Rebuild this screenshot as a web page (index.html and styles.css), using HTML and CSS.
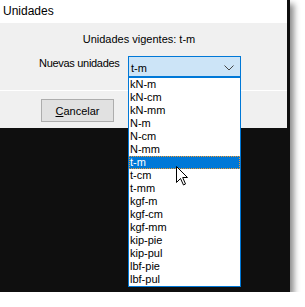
FILE: index.html
```html
<!DOCTYPE html>
<html lang="es">
<head>
    <meta charset="UTF-8">
    <title>Unidades</title>
    <link rel="stylesheet" href="styles.css">
</head>
<body>
    <div class="pantalla">
        <div class="dialogo">
            <div class="titulo">Unidades</div>
            <div class="contenido">
                <div class="vigentes">Unidades vigentes: t-m</div>
                <div class="fila">
                    <span class="etiqueta">Nuevas unidades</span>
                    <div class="combo">
                        <span>t-m</span>
                        <svg class="flecha" width="10" height="6" viewBox="0 0 10 6">
                            <path d="M0.5 0.5 L5 5 L9.5 0.5" fill="none" stroke="#444" stroke-width="1"/>
                        </svg>
                    </div>
                </div>
            </div>
            <div class="pie">
                <button class="boton"><u>C</u>ancelar</button>
            </div>
        </div>
        <ul class="lista">
            <li>kN-m</li>
            <li>kN-cm</li>
            <li>kN-mm</li>
            <li>N-m</li>
            <li>N-cm</li>
            <li>N-mm</li>
            <li class="activo">t-m</li>
            <li>t-cm</li>
            <li>t-mm</li>
            <li>kgf-m</li>
            <li>kgf-cm</li>
            <li>kgf-mm</li>
            <li>kip-pie</li>
            <li>kip-pul</li>
            <li>lbf-pie</li>
            <li>lbf-pul</li>
        </ul>
        <svg class="cursor" width="13" height="20" viewBox="0 0 13 20">
            <path d="M0.5 0.5 L0.5 16.5 L4.5 12.5 L7.5 19 L9.5 18 L6.7 11.5 L11.5 11.5 Z" fill="#fff" stroke="#000" stroke-width="1" stroke-linejoin="miter"/>
        </svg>
    </div>
</body>
</html>
```

FILE: styles.css
```css
/* Ventana de unidades */
body {
    margin: 0;
    background: #ffffff;
    font-family: "Liberation Sans", Arial, sans-serif;
    font-size: 11px;
    color: #000;
}
.pantalla {
    position: relative;
    width: 290px;
    height: 292px;
    background: #0f0f0f;
    box-shadow: 4px 4px 6px rgba(0, 0, 0, 0.45);
}
.dialogo {
    width: 287px;
    background: #f0f0f0;
}
.titulo {
    height: 23px;
    line-height: 22px;
    padding-left: 3px;
    font-size: 12px;
    background: #ffffff;
}
.contenido {
    height: 67px;
    padding-top: 9px;
    box-sizing: border-box;
}
.vigentes {
    text-align: center;
    padding-right: 9px;
    line-height: 14px;
}
.fila {
    display: flex;
    align-items: flex-start;
    margin-top: 10px;
    padding-left: 39px;
}
.etiqueta {
    width: 89px;
    line-height: 14px;
    white-space: nowrap;
    letter-spacing: -0.3px;
}
.combo {
    display: flex;
    align-items: center;
    justify-content: space-between;
    width: 113px;
    height: 21px;
    box-sizing: border-box;
    border: 1px solid #0078d7;
    background: #cce4f7;
    padding: 3px 6px 0 2px;
}
.pie {
    height: 38px;
    border-top: 1px solid #ffffff;
    padding: 8px 0 0 41px;
    box-sizing: border-box;
}
.boton {
    width: 73px;
    height: 23px;
    border: 1px solid #adadad;
    background: #e1e1e1;
    font-family: "Liberation Sans", Arial, sans-serif;
    font-size: 11px;
    padding: 0;
    color: #000;
}
.lista {
    position: absolute;
    left: 128px;
    top: 77px;
    width: 113px;
    height: 210px;
    box-sizing: border-box;
    margin: 0;
    padding: 0;
    list-style: none;
    background: #ffffff;
    border: 1px solid #0078d7;
}
.lista li {
    height: 13px;
    line-height: 13px;
    padding-left: 1px;
    box-sizing: border-box;
}
.lista li.activo {
    background: #0078d7;
    color: #ffffff;
    outline: 1px dotted #f29a2e;
    outline-offset: -1px;
}
.cursor {
    position: absolute;
    left: 176px;
    top: 166px;
}
```
